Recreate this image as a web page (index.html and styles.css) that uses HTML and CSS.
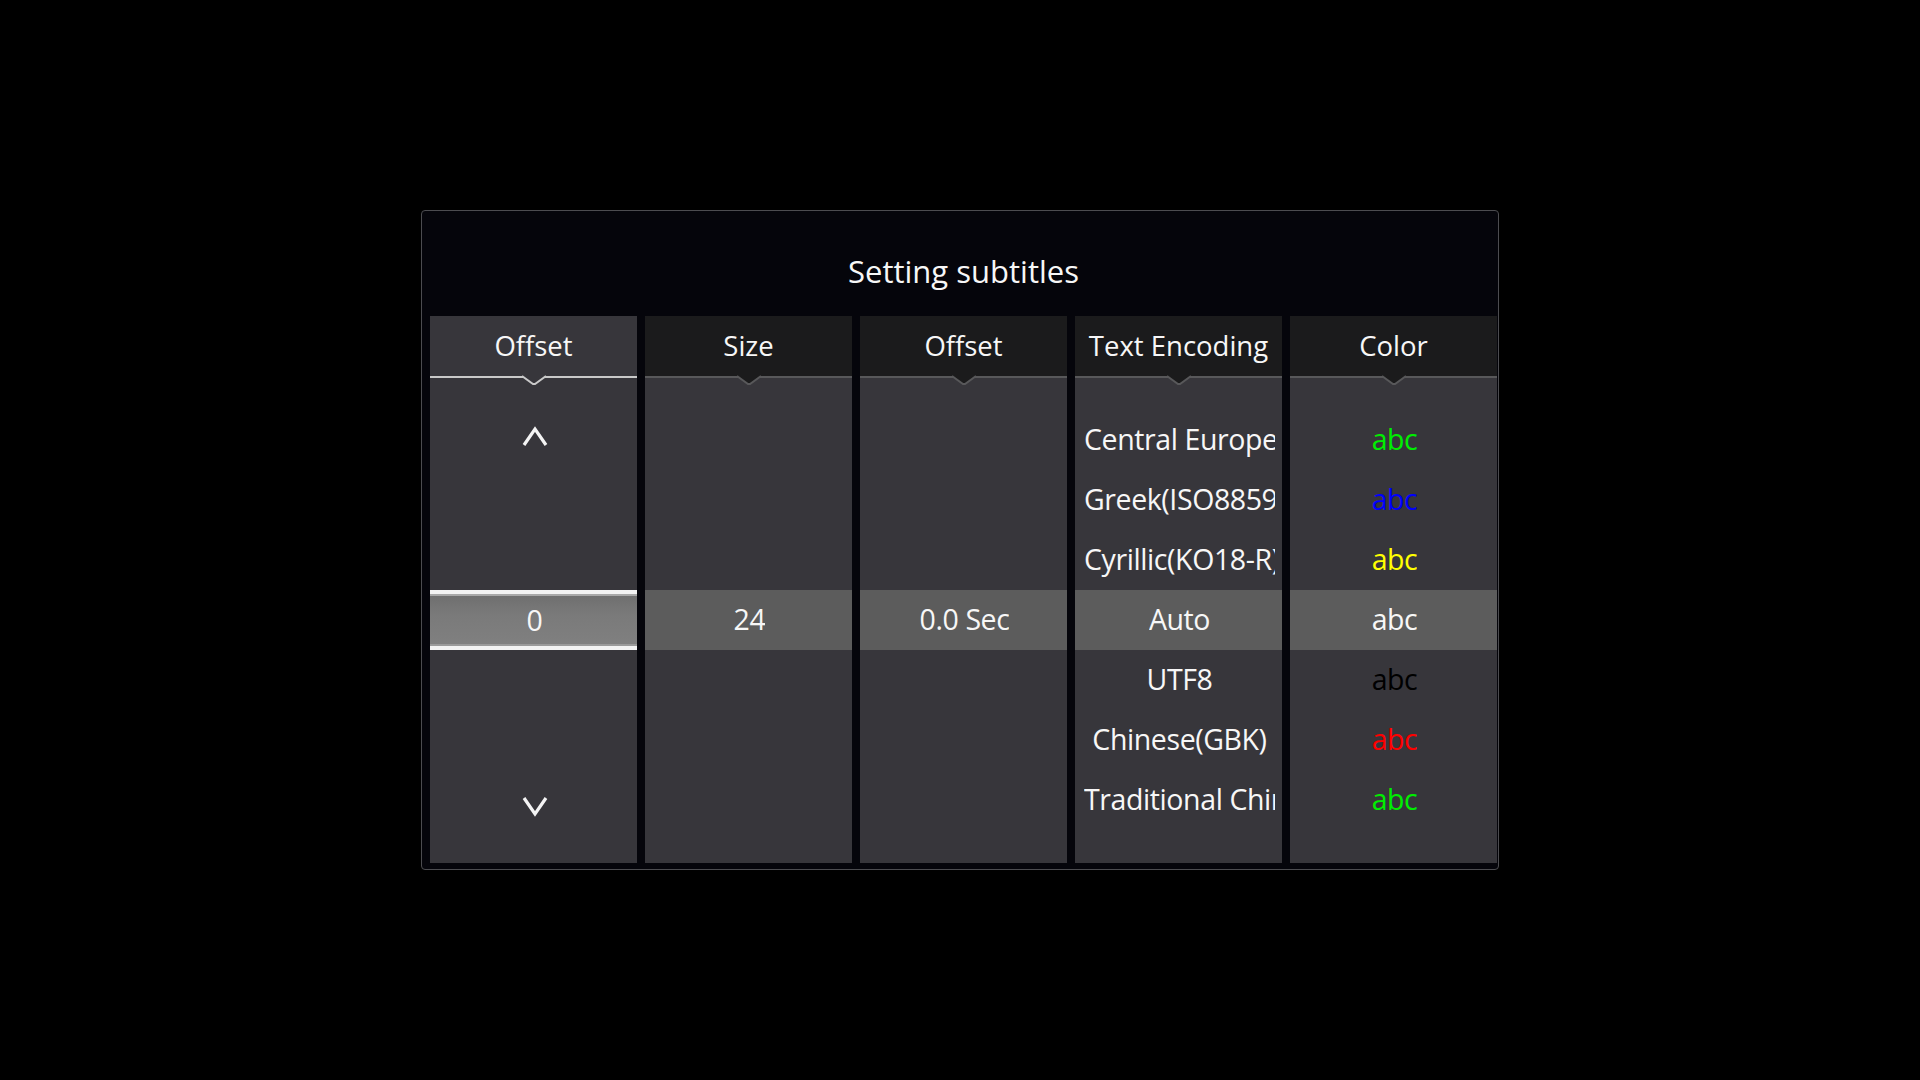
FILE: index.html
```html
<!DOCTYPE html>
<html lang="en">
<head>
    <meta charset="UTF-8">
    <title>Setting subtitles</title>
    <link rel="stylesheet" href="styles.css">
</head>
<body>
    <div class="dialog">
        <h1 class="title">Setting subtitles</h1>

        <div class="columns">
            <div class="column active">
                <div class="head">
                    Offset
                    <svg class="notch" width="24" height="10" viewBox="0 0 24 10"><polyline points="0,1 11,9 13,9 24,1"/></svg>
                </div>
                <div class="list">
                    <div class="row arrow">
                        <svg width="28" height="22" viewBox="0 0 28 22"><polyline points="3,19 14,3 25,19"/></svg>
                    </div>
                    <div class="row"></div>
                    <div class="row"></div>
                    <div class="row current"><span>0</span></div>
                    <div class="row"></div>
                    <div class="row"></div>
                    <div class="row arrow down">
                        <svg width="28" height="22" viewBox="0 0 28 22"><polyline points="3,3 14,19 25,3"/></svg>
                    </div>
                </div>
            </div>

            <div class="column">
                <div class="head">
                    Size
                    <svg class="notch" width="24" height="10" viewBox="0 0 24 10"><polyline points="0,1 11,9 13,9 24,1"/></svg>
                </div>
                <div class="list">
                    <div class="row"></div>
                    <div class="row"></div>
                    <div class="row"></div>
                    <div class="row current"><span>24</span></div>
                </div>
            </div>

            <div class="column">
                <div class="head">
                    Offset
                    <svg class="notch" width="24" height="10" viewBox="0 0 24 10"><polyline points="0,1 11,9 13,9 24,1"/></svg>
                </div>
                <div class="list">
                    <div class="row"></div>
                    <div class="row"></div>
                    <div class="row"></div>
                    <div class="row current"><span>0.0 Sec</span></div>
                </div>
            </div>

            <div class="column">
                <div class="head">
                    Text Encoding
                    <svg class="notch" width="24" height="10" viewBox="0 0 24 10"><polyline points="0,1 11,9 13,9 24,1"/></svg>
                </div>
                <div class="list">
                    <div class="row"><span>Central Europe</span></div>
                    <div class="row"><span>Greek(ISO8859-7)</span></div>
                    <div class="row"><span>Cyrillic(KO18-R)</span></div>
                    <div class="row current"><span>Auto</span></div>
                    <div class="row"><span>UTF8</span></div>
                    <div class="row"><span>Chinese(GBK)</span></div>
                    <div class="row"><span>Traditional Chinese(BIG5)</span></div>
                </div>
            </div>

            <div class="column">
                <div class="head">
                    Color
                    <svg class="notch" width="24" height="10" viewBox="0 0 24 10"><polyline points="0,1 11,9 13,9 24,1"/></svg>
                </div>
                <div class="list">
                    <div class="row green"><span>abc</span></div>
                    <div class="row blue"><span>abc</span></div>
                    <div class="row yellow"><span>abc</span></div>
                    <div class="row current"><span>abc</span></div>
                    <div class="row black"><span>abc</span></div>
                    <div class="row red"><span>abc</span></div>
                    <div class="row green"><span>abc</span></div>
                </div>
            </div>
        </div>
    </div>
</body>
</html>
```

FILE: styles.css
```css
html, body {
    margin: 0;
    padding: 0;
    height: 100%;
}
body {
    background: #000;
    font-family: "Open Sans", "Noto Sans", sans-serif;
    color: #f7f7f7;
    display: flex;
    align-items: center;
    justify-content: center;
}
.dialog {
    box-sizing: border-box;
    width: 1078px;
    height: 660px;
    background: #05050b;
    border: 1px solid #4c4c50;
    border-radius: 4px;
    padding: 0 1px 6px 8px;
    display: flex;
    flex-direction: column;
}
.title {
    margin: 0;
    height: 105px;
    box-sizing: border-box;
    padding-top: 40px;
    line-height: 40px;
    font-size: 31px;
    font-weight: normal;
    text-align: center;
}
.columns {
    flex: 1;
    display: flex;
    gap: 8px;
}
.column {
    width: 207px;
    background: #37363b;
    display: flex;
    flex-direction: column;
}
.head {
    position: relative;
    height: 58px;
    padding-bottom: 2px;
    background: #1b1b1c;
    border-bottom: 2px solid #58585a;
    display: flex;
    align-items: center;
    justify-content: center;
    font-size: 27.5px;
}
.column.active .head {
    background: #37363b;
    border-bottom-color: #c9c9c9;
}
.notch {
    position: absolute;
    left: 92px;
    bottom: -9px;
}
.notch polyline {
    fill: #1b1b1c;
    stroke: #58585a;
    stroke-width: 2;
}
.column.active .notch polyline {
    fill: #37363b;
    stroke: #c9c9c9;
}
.list {
    padding-top: 32px;
    display: flex;
    flex-direction: column;
}
.row {
    box-sizing: border-box;
    height: 60px;
    padding: 0 7px 2px 9px;
    display: flex;
    align-items: center;
    justify-content: center;
    white-space: nowrap;
    font-size: 28.5px;
    letter-spacing: -0.4px;
}
.row span {
    min-width: 0;
    overflow: hidden;
}
.row.current {
    background: #5c5c5c;
}
.column.active .row.current {
    background: linear-gradient(to bottom, #6e6e6e, #7a7a7a 40%, #808080);
    border-top: 4px solid #f2f2f2;
    border-bottom: 4px solid #f2f2f2;
    box-shadow: inset 0 2px 0 #a8a8a8, inset 0 -2px 0 #9a9a9a;
    padding-bottom: 1px;
}
.row.arrow {
    align-items: flex-start;
    padding-top: 16px;
}
.row.arrow.down {
    padding-top: 25px;
}
.row.arrow polyline {
    fill: none;
    stroke: #f4f4f4;
    stroke-width: 3.2;
}
.green { color: #00ee00; }
.blue { color: #0000ff; }
.yellow { color: #ffff00; }
.black { color: #000; }
.red { color: #ff0000; }
```
